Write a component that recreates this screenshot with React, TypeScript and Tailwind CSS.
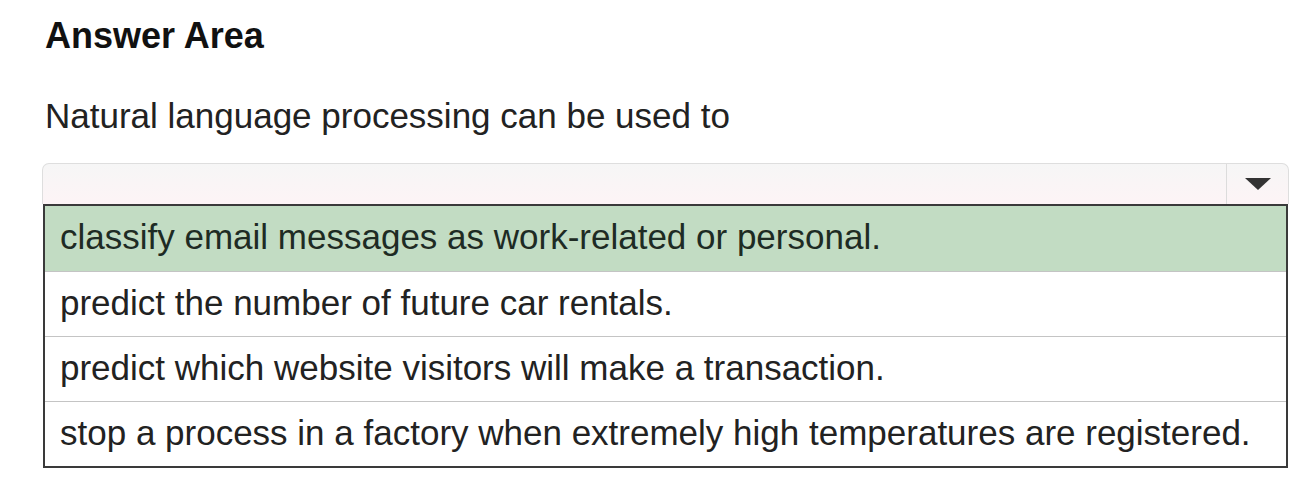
import React from 'react'

const options = [
  'classify email messages as work-related or personal.',
  'predict the number of future car rentals.',
  'predict which website visitors will make a transaction.',
  'stop a process in a factory when extremely high temperatures are registered.',
]

function App() {
  const selected = 0

  return (
    <div className="min-h-[478px] bg-white pl-[42px] pt-[16px] font-['Liberation_Sans',Arial,sans-serif]">
      <h1 className="pl-[3px] text-[36px] leading-[40px] font-bold text-[#111]">Answer Area</h1>
      <p className="mt-[40px] pl-[3px] text-[35px] leading-[40px] text-[#222]">
        Natural language processing can be used to
      </p>

      <div className="mt-[27px] w-[1247px]">
        {/* select box */}
        <div className="flex h-[41px] rounded-t-[7px] border border-b-0 border-[#dedede] bg-gradient-to-b from-[#f6f6f6] to-[#fdf4f6]">
          <div className="flex-1" />
          <div className="flex w-[62px] items-center justify-center border-l border-[#dcdcdc]">
            <svg width="28" height="14" viewBox="0 0 28 14">
              <path d="M1 1 L27 1 L14 13 Z" fill="#333" />
            </svg>
          </div>
        </div>

        {/* options list */}
        <ul className="ml-[1px] w-[1245px] border-2 border-[#3a3a3a] bg-white">
          {options.map((opt, i) => (
            <li
              key={i}
              className={
                'flex h-[65px] items-center px-[15px] pb-[4px] text-[35px] leading-[35px] ' +
                (i > 0 ? 'border-t border-[#c4c4c4] ' : '') +
                (i === selected ? 'bg-[#c2dcc3] text-[#1e2b24]' : 'text-[#222]')
              }
            >
              {opt}
            </li>
          ))}
        </ul>
      </div>
    </div>
  )
}

export default App
